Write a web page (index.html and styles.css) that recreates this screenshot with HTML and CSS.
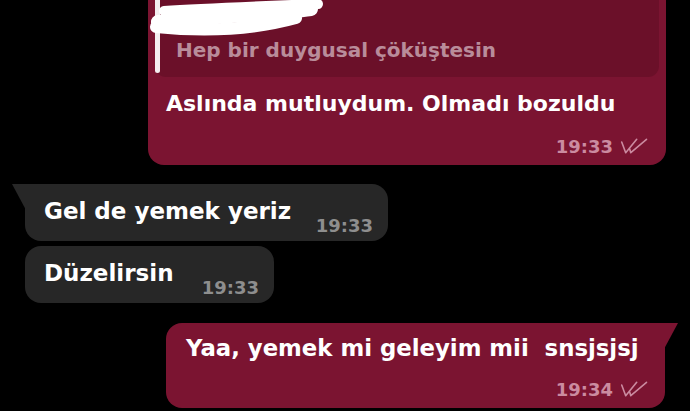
FILE: index.html
```html
<!DOCTYPE html>
<html lang="tr">
<head>
<meta charset="utf-8">
<link rel="stylesheet" href="styles.css">
</head>
<body>
<main class="chat">
  <div class="msg out quoted">
    <div class="reply">
      <span class="reply-bar"></span>
      <p class="reply-text">Hep bir duygusal çöküştesin</p>
      <svg class="scribble" width="200" height="80" viewBox="0 0 200 80">
        <path d="M18 11 C60 8 120 6 172 4" stroke="#fff" stroke-width="10" stroke-linecap="round" fill="none"/>
        <path d="M12 22 C70 16 130 14 165 9" stroke="#fff" stroke-width="14" stroke-linecap="round" fill="none"/>
        <path d="M10 27 C60 32 110 29 150 18" stroke="#fff" stroke-width="12" stroke-linecap="round" fill="none"/>
      </svg>
    </div>
    <p class="text">Aslında mutluydum. Olmadı bozuldu</p>
    <div class="meta"><span class="time">19:33</span>
      <svg class="ticks" width="28" height="17" viewBox="0 0 28 17"><path d="M1.7 4 L5.7 14.7 L16.7 1.3 M9.5 10.5 L10.8 14.7 L26.5 1.3" stroke="currentColor" stroke-width="1.6" fill="none" stroke-linecap="round" stroke-linejoin="round"/></svg>
    </div>
  </div>

  <div class="msg in tail-in w1">
    <p class="text">Gel de yemek yeriz</p>
    <span class="time">19:33</span>
  </div>

  <div class="msg in w2">
    <p class="text">Düzelirsin</p>
    <span class="time">19:33</span>
  </div>

  <div class="msg out tail-out last">
    <p class="text">Yaa, yemek mi geleyim mii&nbsp; snsjsjsj</p>
    <div class="meta"><span class="time">19:34</span>
      <svg class="ticks" width="28" height="17" viewBox="0 0 28 17"><path d="M1.7 4 L5.7 14.7 L16.7 1.3 M9.5 10.5 L10.8 14.7 L26.5 1.3" stroke="currentColor" stroke-width="1.6" fill="none" stroke-linecap="round" stroke-linejoin="round"/></svg>
    </div>
  </div>
</main>
</body>
</html>
```
FILE: styles.css
```css
* { box-sizing: border-box; }
html, body {
  margin: 0;
  padding: 0;
  background: #000;
}
body {
  width: 690px;
  height: 411px;
  overflow: hidden;
  font-family: "DejaVu Sans", "Liberation Sans", Arial, sans-serif;
  font-weight: 700;
  color: #fff;
}
p { margin: 0; }

.chat {
  display: flex;
  flex-direction: column;
  align-items: flex-start;
}

.msg {
  position: relative;
}

.out {
  background: #7b1431;
}
.in {
  background: #272727;
  border-radius: 16px;
  margin-left: 25px;
  display: flex;
  align-items: flex-end;
  justify-content: space-between;
  height: 57px;
  padding: 0 15px 5px 19px;
}
.in .text {
  font-size: 23px;
  align-self: center;
  margin-bottom: -2px;
}
.in .time {
  color: #8e8e8e;
  font-size: 18px;
}

.quoted {
  margin-left: 148px;
  width: 518px;
  height: 165px;
  border-radius: 0 0 16px 16px;
  padding: 0 7px 0 7px;
  display: flex;
  flex-direction: column;
}
.reply {
  position: relative;
  height: 77px;
  background: #6b1029;
  border-radius: 0 0 11px 11px;
  padding: 38px 0 0 21px;
}
.reply-bar {
  position: absolute;
  left: 0;
  top: 0;
  width: 5px;
  height: 73px;
  background: #f4eef0;
  border-radius: 0 0 3px 3px;
}
.reply-text {
  font-size: 20px;
  color: #b98c9a;
}
.scribble {
  position: absolute;
  left: -9px;
  top: 0;
}
.quoted .text {
  font-size: 22px;
  padding: 14px 0 0 11px;
}
.meta {
  display: flex;
  align-items: center;
  justify-content: flex-end;
  gap: 7px;
  color: #cb8ba0;
  margin-top: auto;
  padding: 0 11px 8px 0;
}
.meta .time {
  font-size: 18px;
}
.ticks { display: block; }

.w1 { margin-top: 19px; width: 363px; }
.w2 { margin-top: 5px; width: 249px; }

.tail-in::before {
  content: "";
  position: absolute;
  left: -13px;
  top: 0;
  width: 30px;
  height: 24px;
  background: #272727;
  clip-path: polygon(0 0, 100% 0, 100% 100%, 43% 100%);
}

.last {
  margin-top: 20px;
  margin-left: 166px;
  width: 499px;
  height: 85px;
  border-radius: 16px 0 16px 16px;
  display: flex;
  flex-direction: column;
  padding-top: 12px;
}
.last .text {
  font-size: 22.8px;
  padding-left: 20px;
}
.last .meta { padding: 0 17px 8px 0; }
.tail-out::after {
  content: "";
  position: absolute;
  right: -13px;
  top: 0;
  width: 30px;
  height: 24px;
  background: #7b1431;
  clip-path: polygon(0 0, 100% 0, 57% 100%, 0 100%);
}
```
